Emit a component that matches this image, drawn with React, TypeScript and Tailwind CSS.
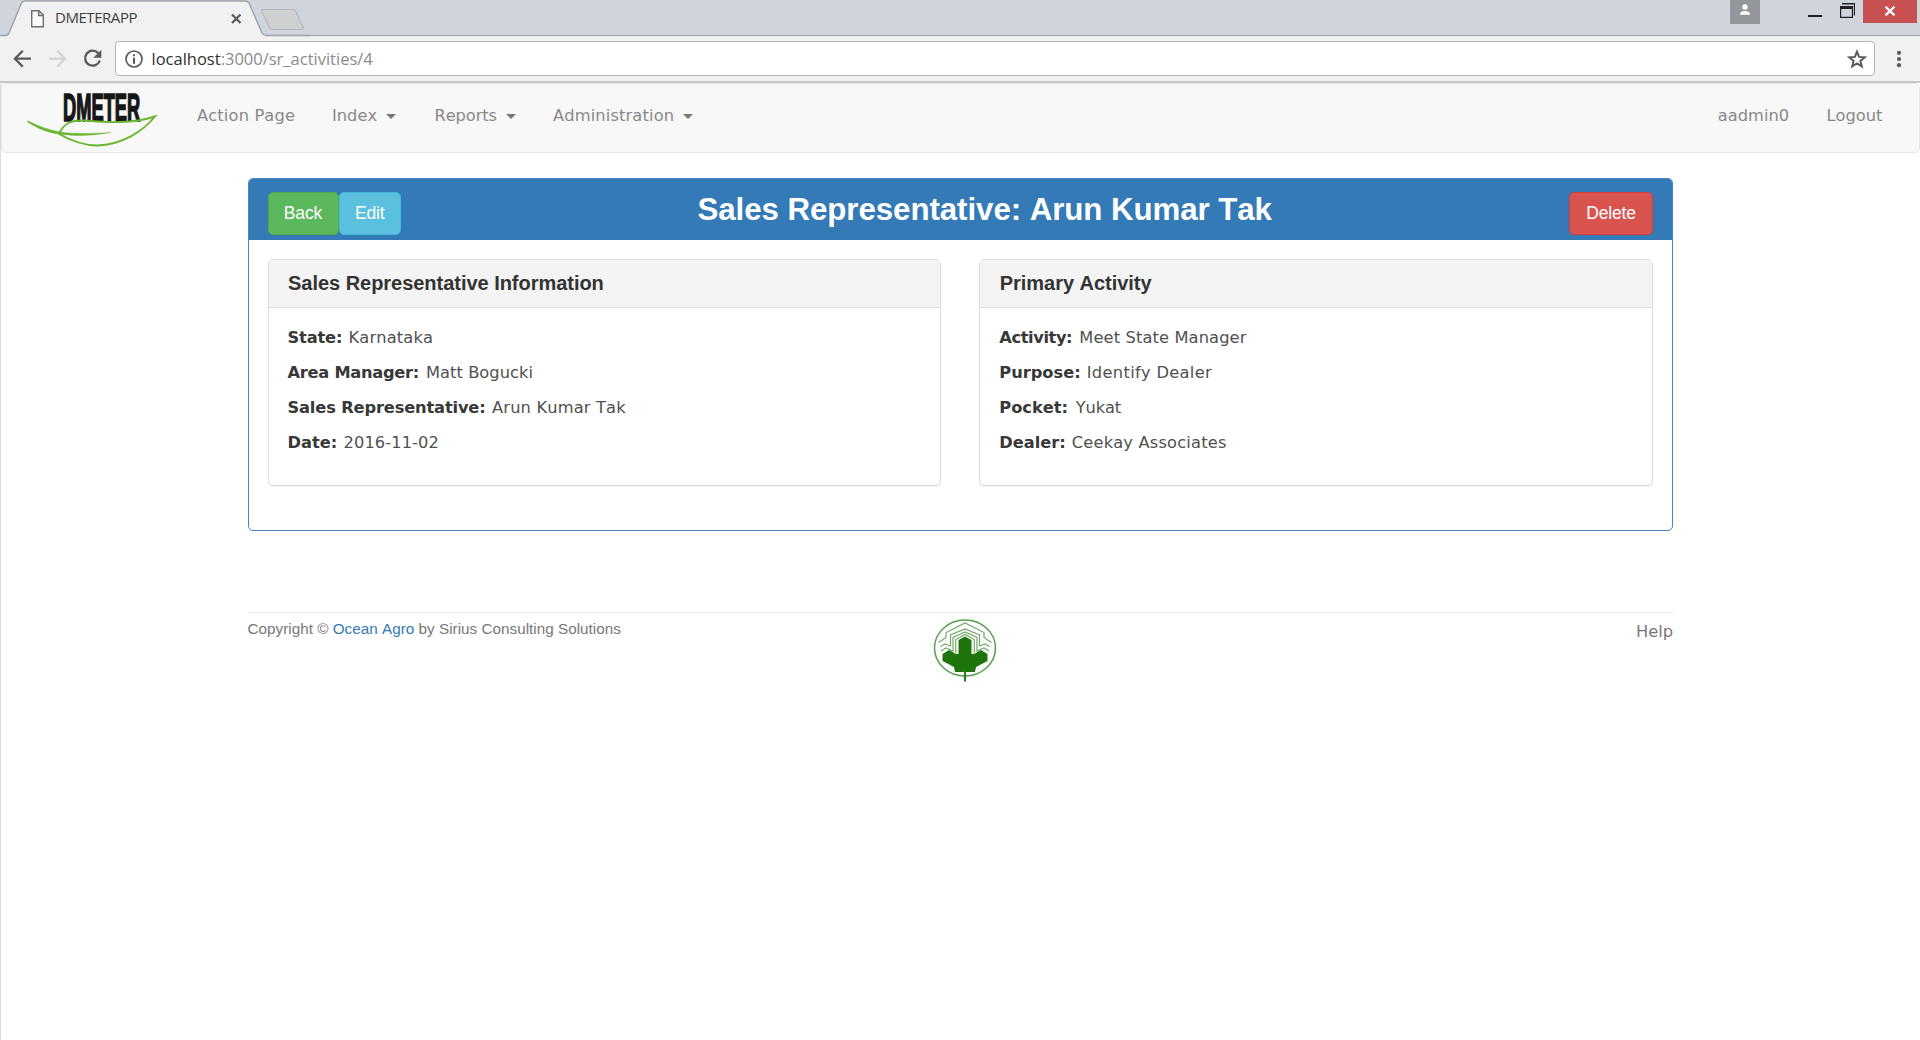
const UI = "font-['DejaVu_Sans','Verdana',sans-serif]";
const ARIAL = "font-['Liberation_Sans','Arial',sans-serif]";
const SEGOE = "font-['Open_Sans','Segoe_UI',sans-serif]";

function TabStrip() {
  return (
    <div className="flex h-9 items-start justify-between border-b border-[#a0a3a9] bg-[#d0d5dd]">
      <div className="relative h-9 w-[310px]">
        <svg className="absolute left-0 top-0" width="310" height="37" viewBox="0 0 310 37">
          <path d="M0 35.6 H5.5 Q8 35.6 9 33 L21.5 3 Q22.5 1 25 1 H245 Q248 1 249 3 L262 33 Q263.5 35.6 266 35.6 V37 H0 Z" fill="#f1f1f1" />
          <path d="M0 35.6 H5.5 Q8 35.6 9 33 L21.5 3 Q22.5 1 25 1 H245 Q248 1 249 3 L262 33 Q263.5 35.6 266 35.6 H310" fill="none" stroke="#a0a3a9" strokeWidth="1.5" />
          <path d="M263.5 9.5 H292.5 Q295 9.5 296 11.5 L303 27 Q304 29.5 301.5 29.5 H273 Q270.5 29.5 269.5 27.5 L262 12 Q261 9.5 263.5 9.5 Z" fill="#d0d0d0" stroke="#b4b8be" strokeWidth="1.2" />
          <path d="M31.7 10.7 H39 L43.3 15 V26.8 H31.7 Z M38.7 10.7 V15.5 H43.3" fill="#fafafa" stroke="#6e6e6e" strokeWidth="1.4" />
          <path d="M232 14.5 L240.5 23 M240.5 14.5 L232 23" stroke="#5a5a5a" strokeWidth="2.2" />
        </svg>
        <span className={`relative ml-[55px] block pt-[6px] text-[15px] leading-[23px] tracking-[-0.45px] text-[#404040] ${SEGOE}`}>DMETERAPP</span>
      </div>
      <div className="flex items-start">
        <div className="mr-[47px] flex h-[23.5px] w-[30.5px] items-center justify-center bg-[#93979c]">
          <svg className="mb-[3px]" width="12" height="14" viewBox="0 0 12 14">
            <circle cx="6" cy="4" r="2.7" fill="#fff" />
            <path d="M1 11.7 Q1 8 6 8 Q11 8 11 11.7 Z" fill="#fff" />
          </svg>
        </div>
        <svg className="mr-[8px]" width="48" height="23" viewBox="0 0 48 23">
          <path d="M1 15 H15 V17 H1 Z" fill="#222" />
          <path d="M33.6 17.3 V7 H45.4 V17.3 Z" fill="none" stroke="#222" strokeWidth="1.2" />
          <path d="M33 6 H46 V9 H33 Z M35 3 H48 V15.5 H46.8 V4.5 H35 Z" fill="#222" />
        </svg>
        <div className="mr-[3px] flex h-[23px] w-[54px] items-center justify-center bg-[#c75050]">
          <svg className="mb-[2px]" width="12" height="10" viewBox="0 0 12 10">
            <path d="M1.500 0.700 L10.500 9.300 M10.500 0.700 L1.500 9.300" stroke="#fff" strokeWidth="2.300" />
          </svg>
        </div>
      </div>
    </div>
  );
}

function Toolbar() {
  return (
    <div className="flex h-[47px] items-center border-b-2 border-[#c6c8c7] bg-[#f1f1f1]">
      <svg width="115" height="45" viewBox="0 0 115 45" fill="none">
        <path d="M31 22.7 H15.5 M22.8 14.8 L14.9 22.7 L22.8 30.6" stroke="#5a5a5a" strokeWidth="2.3" />
        <path d="M49 22.7 H64.5 M57.2 14.8 L65.1 22.7 L57.2 30.6" stroke="#d3d3d3" strokeWidth="2.3" />
        <path d="M98.3 17.2 A7.5 7.5 0 1 0 99.8 24.5" stroke="#5a5a5a" strokeWidth="2.3" />
        <path d="M101.3 13.8 V21.8 H93.3 Z" fill="#5a5a5a" />
      </svg>
      <div className={`flex h-[35px] w-[1760px] items-center rounded-[4px] border border-[#b5b5b5] bg-white ${SEGOE}`}>
        <svg className="ml-[8px]" width="20" height="20" viewBox="0 0 20 20">
          <circle cx="10" cy="10" r="8" fill="none" stroke="#5a5a5a" strokeWidth="1.7" />
          <path d="M9 5.3 H11 V7.3 H9 Z M9 8.8 H11 V14.8 H9 Z" fill="#5a5a5a" />
        </svg>
        <span className="ml-[7.5px] grow pt-px text-[16.5px] leading-6 text-[#8a8a8a]">
          <span className="text-[#303030]">localhost</span>:3000/sr_activities/4
        </span>
        <svg className="mr-[7px]" width="20" height="20" viewBox="0 0 20 20">
          <path d="M10 2.600 L12.100 7.900 L17.700 8.300 L13.400 11.900 L14.800 17.400 L10 14.400 L5.200 17.400 L6.600 11.900 L2.300 8.300 L7.900 7.900 Z" fill="none" stroke="#5a5a5a" strokeWidth="2" />
        </svg>
      </div>
      <svg className="ml-[20.5px]" width="6" height="20" viewBox="0 0 6 20" fill="#5a5a5a">
        <circle cx="3" cy="3.8" r="2.1" />
        <circle cx="3" cy="10" r="2.1" />
        <circle cx="3" cy="16.2" r="2.1" />
      </svg>
    </div>
  );
}

function BrandLogo() {
  return (
    <svg className="ml-[22.5px] mt-[3px]" width="136" height="64" viewBox="0 0 136 64">
      <text x="0" y="0" transform="translate(38 33.500) scale(0.480 1)" fontFamily="'Liberation Sans', Arial, sans-serif" fontWeight="700" fontSize="38.500" textLength="161" lengthAdjust="spacingAndGlyphs" fill="#161616" stroke="#161616" strokeWidth="1.700">DMETER</text>
      <path d="M2 34.500 C13 42 24 46 34 47 C50 49.300 66 49 86 45.500 C66 46.700 50 47 36 45.300 C24 43 13 39 3 34 Z" fill="#6ab42e" stroke="#6ab42e" strokeWidth="0.400" />
      <path d="M34 47 C39 35.500 47 33 60 33.500 C84 35.500 106 37 130 29.500 C118 44 98 57.500 72 58.500 C56 58.500 43 52 34 47" fill="none" stroke="#6ab42e" strokeWidth="1.900" />
    </svg>
  );
}

function Caret() {
  return <span className="ml-[9px] mt-px inline-block border-x-[5px] border-t-[5px] border-x-transparent border-t-[#777]" />;
}

function Navbar() {
  return (
    <nav className={`flex h-[70px] w-full rounded-[5px] border border-[#e7e7e7] bg-[#f8f8f8] text-[16.25px] text-[#888] ${UI}`}>
      <BrandLogo />
      <div className="flex grow items-center pb-[4px]">
        <a className="ml-[36.5px] w-[135px] tracking-[0.15px]">Action Page</a>
        <a className="flex w-[102.500px] items-center">Index<Caret /></a>
        <a className="flex w-[118.500px] items-center tracking-[-0.1px]">Reports<Caret /></a>
        <a className="flex items-center tracking-[0.14px]">Administration<Caret /></a>
      </div>
      <div className="flex items-center gap-[37.500px] pb-[4px] pr-[36.5px]">
        <a>aadmin0</a>
        <a>Logout</a>
      </div>
    </nav>
  );
}

type Row = { label: string; value: string; labelClass: string; valueClass: string };

const info: Row[] = [
  { label: "State:", value: "Karnataka", labelClass: "w-[61px] tracking-[-0.15px]", valueClass: "tracking-[0.15px]" },
  { label: "Area Manager:", value: "Matt Bogucki", labelClass: "w-[138.5px] tracking-[-0.27px]", valueClass: "tracking-[0.05px]" },
  { label: "Sales Representative:", value: "Arun Kumar Tak", labelClass: "w-[204.5px] tracking-[-0.15px]", valueClass: "tracking-[0.17px]" },
  { label: "Date:", value: "2016-11-02", labelClass: "w-[56px]", valueClass: "tracking-[0.1px]" },
];

const activity: Row[] = [
  { label: "Activity:", value: "Meet State Manager", labelClass: "w-[80px] tracking-[-0.4px]", valueClass: "tracking-[0.13px]" },
  { label: "Purpose:", value: "Identify Dealer", labelClass: "w-[87.5px]", valueClass: "tracking-[0.32px]" },
  { label: "Pocket:", value: "Yukat", labelClass: "w-[76.5px]", valueClass: "tracking-[-0.15px]" },
  { label: "Dealer:", value: "Ceekay Associates", labelClass: "w-[72.5px]", valueClass: "tracking-[0.18px]" },
];

function Card({ title, rows }: { title: string; rows: Row[] }) {
  return (
    <section className="h-[227.500px] grow basis-0 overflow-hidden rounded-[5px] border border-[#ddd] bg-white shadow-[0_1px_1px_rgba(0,0,0,0.05)]">
      <h3 className={`flex h-12 items-center border-b border-[#ddd] bg-[#f4f4f4] pl-[19.500px] text-[20px] font-bold leading-6 tracking-[-0.03px] text-[#333] ${ARIAL}`}>{title}</h3>
      <div className={`pl-[19px] pt-[13px] text-[16.25px] ${UI}`}>
        {rows.map((r) => (
          <p key={r.label} className="flex h-[35px] items-center whitespace-nowrap">
            <b className={`font-bold text-[#383838] ${r.labelClass}`}>{r.label}</b>
            <span className={`text-[#505050] ${r.valueClass}`}>{r.value}</span>
          </p>
        ))}
      </div>
    </section>
  );
}

function FooterLogo() {
  return (
    <svg className="mt-[6px]" width="66" height="66" viewBox="0 0 66 66" fill="none">
      <ellipse cx="33" cy="29" rx="30.500" ry="28" stroke="#5a9c52" strokeWidth="1.500" />
      <g stroke="#72ab6a" strokeWidth="1.200">
        <path d="M6.500 23.500 L14 18.500 V13.500 L33 4 L52 13.500 V18.500 L59.500 23.500" />
        <path d="M8.500 27.500 L13 25 L18.500 27 V16 L33 10 L47.500 16 V27 L53 25 L57.500 27.500" />
        <path d="M9 32 L14 29 L21 32 V18.500 L33 13 L45 18.500 V32 L52 29 L57 32" />
        <path d="M23.700 34 V20.500 L33 15.500 L42.300 20.500 V34" />
      </g>
      <path d="M33 17.500 L39.500 21 V35 H42 L49 31 L55.500 35 V42 L44 48 L43 53 H23 L22 48 L10.500 42 V35 L17 31 L24 35 H26.500 V21 Z" fill="#1f740c" />
      <path d="M33 52 V62.500" stroke="#2f7d20" strokeWidth="2.200" />
    </svg>
  );
}

const button = "flex h-[42.5px] items-center rounded-[5px] border px-[14px] text-[17.5px] tracking-[-0.15px] text-white";

export default function App() {
  return (
    <div className="min-h-[1040px] w-full overflow-hidden bg-white [font-kerning:none]">
      <TabStrip />
      <Toolbar />
      <div className="min-h-[957px] border-l border-[#dcdcdc]">
        <Navbar />
        <main className="ml-[246.500px] mt-[25px] w-[1425.500px]">
          <article className="h-[352.5px] overflow-hidden rounded-[5px] border border-[#4787bd] bg-white">
            <header className={`flex h-[61px] items-start justify-between bg-[#337ab7] px-[19px] pt-[13px] ${ARIAL}`}>
              <div className="flex">
                <button className={`${button} w-[71px] justify-center border-[#4cae4c] bg-[#5cb85c]`}>Back</button>
                <button className={`${button} w-[62.500px] justify-center border-[#46b8da] bg-[#5bc0de]`}>Edit</button>
              </div>
              <h1 className="ml-[12px] grow pl-[284.500px] text-[31.250px] font-bold leading-[36px] tracking-[-0.060px] text-white">Sales Representative: Arun Kumar Tak</h1>
              <button className={`${button} w-[84px] justify-center border-[#d43f3a] bg-[#d9534f]`}>Delete</button>
            </header>
            <div className="flex gap-[38px] px-[19px] pt-[18.500px]">
              <Card title="Sales Representative Information" rows={info} />
              <Card title="Primary Activity" rows={activity} />
            </div>
          </article>
          <footer className={`mt-[81px] flex items-start justify-between border-t border-[#e8e8e8] text-[#777] ${ARIAL}`}>
            <small className="w-[684px] pt-[6px] text-[15.250px] leading-[20px] tracking-[0.020px]">
              Copyright © <a className="text-[#337ab7]">Ocean Agro</a> by Sirius Consulting Solutions
            </small>
            <FooterLogo />
            <a className={`grow pt-[8px] text-right text-[16.250px] leading-[22px] ${UI}`}>Help</a>
          </footer>
        </main>
      </div>
    </div>
  );
}
